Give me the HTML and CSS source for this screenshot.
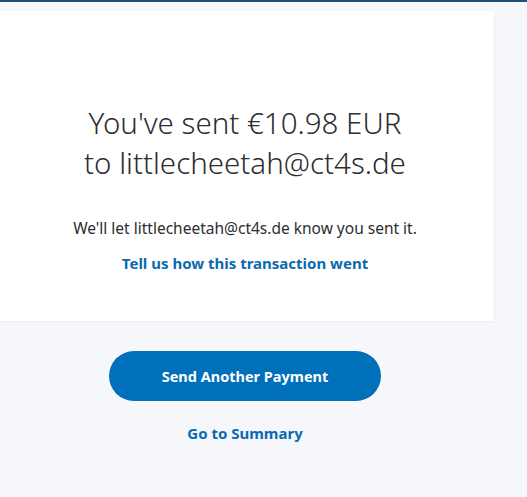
FILE: index.html
```html
<!DOCTYPE html>
<html>
<head>
<meta charset="utf-8">
<link rel="stylesheet" href="styles.css">
</head>
<body>
<div class="topbar"></div>
<main class="column">
  <section class="card">
    <h1 class="title">You've sent €10.98 EUR<br>to littlecheetah@ct4s.de</h1>
    <p class="note">We'll let littlecheetah@ct4s.de know you sent it.</p>
    <a class="link" href="#">Tell us how this transaction went</a>
  </section>
  <div class="actions">
    <button class="btn">Send Another Payment</button>
    <a class="link summary" href="#">Go to Summary</a>
  </div>
</main>
</body>
</html>
```
FILE: styles.css
```css
html, body {
  margin: 0;
  padding: 0;
  background: #f5f7fa;
  font-family: "Noto Sans", "Open Sans", sans-serif;
  color: #2c2e2f;
}
.topbar {
  height: 2px;
  background: #1f4e74;
}
.column {
  width: 494px;
  display: flex;
  flex-direction: column;
  align-items: center;
}
.card {
  margin-top: 9px;
  width: 494px;
  height: 310px;
  box-sizing: border-box;
  background: #ffffff;
  box-shadow: 0 1px 3px rgba(0,0,0,0.06);
  display: flex;
  flex-direction: column;
  align-items: center;
  padding: 92px 4px 0 0;
}
.title {
  margin: 0;
  font-size: 29.5px;
  font-weight: 300;
  line-height: 40px;
  text-align: center;
  color: #2c2e2f;
}
.note {
  margin: 34px 0 0;
  font-size: 15.5px;
  line-height: 22px;
}
.link {
  margin-top: 13px;
  font-size: 15px;
  font-weight: 700;
  color: #0a6ab0;
  text-decoration: none;
  line-height: 22px;
}
.actions {
  margin-top: 30px;
  width: 490px;
  align-self: flex-start;
  display: flex;
  flex-direction: column;
  align-items: center;
}
.btn {
  width: 272px;
  height: 50px;
  border: none;
  border-radius: 25px;
  background: #0070ba;
  color: #ffffff;
  font-family: "Noto Sans", "Open Sans", sans-serif;
  font-size: 14.5px;
  font-weight: 700;
}
.summary {
  margin-top: 21px;
}
```
